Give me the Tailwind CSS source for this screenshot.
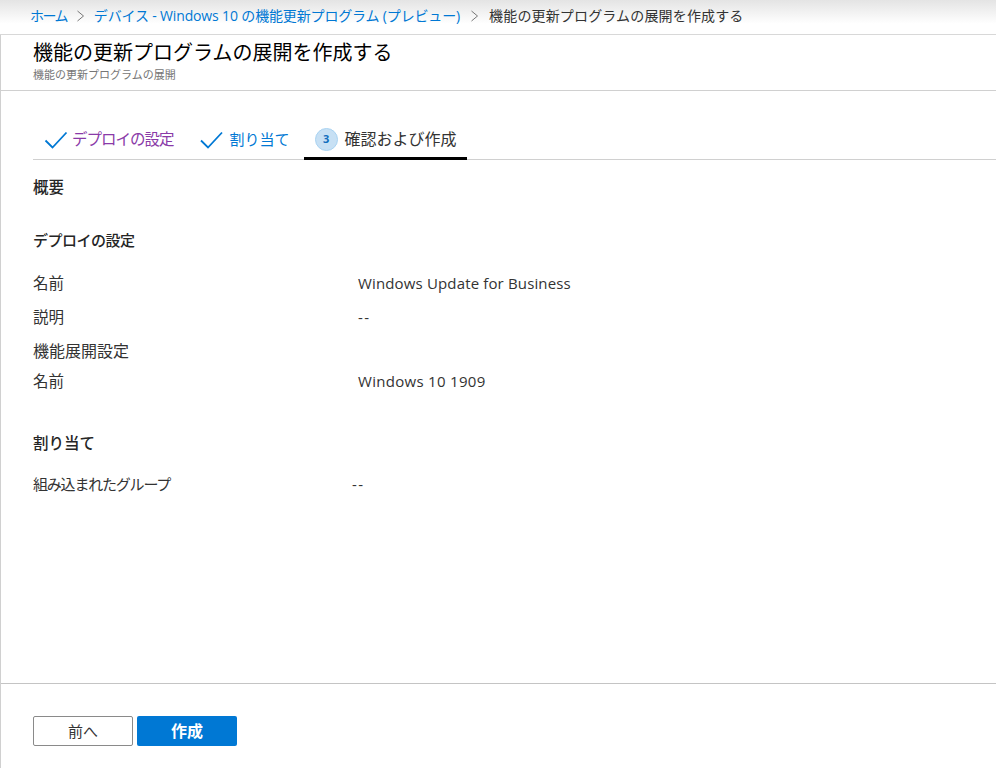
<!DOCTYPE html>
<html lang="ja">
<head>
    <meta charset="UTF-8">
    <title>機能の更新プログラムの展開を作成する</title>
    <script src="https://cdn.jsdelivr.net/npm/@tailwindcss/browser@4"></script>
</head>
<body class="bg-white h-[768px] w-[996px] overflow-hidden flex flex-col font-['Open_Sans','Noto_Sans_CJK_JP',sans-serif] text-[#333]">

    <!-- Breadcrumb -->
    <nav class="h-[35px] shrink-0 flex items-center pl-[30px] pb-[2px] gap-[9px] text-sm bg-gradient-to-b from-[#e4e4e4] to-white to-70% border-b border-[#d8d8d8]">
        <a class="text-[#0078d4] tracking-[-1.6px]">ホーム</a>
        <svg width="9" height="12" viewBox="0 0 9 12" fill="none" stroke="#777" stroke-width="1"><path d="M1.5 1l6 5-6 5"/></svg>
        <a class="text-[#0078d4] tracking-[-0.15px]">デバイス - Windows 10 の機能更新プログラム (プレビュー)</a>
        <svg class="ml-[1px]" width="9" height="12" viewBox="0 0 9 12" fill="none" stroke="#777" stroke-width="1"><path d="M1.5 1l6 5-6 5"/></svg>
        <span class="ml-[1px] tracking-[0.16px]">機能の更新プログラムの展開を作成する</span>
    </nav>

    <main class="flex-1 flex flex-col border-l border-[#d0d0d0]">
        <!-- Title -->
        <header class="h-[56px] shrink-0 pl-[32px] pt-[4px] border-b border-[#d0d0d0]">
            <h1 class="text-[20px] leading-[28px] text-black">機能の更新プログラムの展開を作成する</h1>
            <p class="mt-[2px] text-[11px] leading-[12px] text-[#767676]">機能の更新プログラムの展開</p>
        </header>

        <div class="flex-1 pl-[32px]">
            <!-- Steps -->
            <div class="mt-[30px] h-[39px] flex border-b border-[#d0d0d0]">
                <div class="flex items-center pl-[11px] pr-[15px] gap-[4px] pb-[1px]">
                    <svg width="24" height="18" viewBox="0 0 24 18" fill="none" stroke="#0078d4" stroke-width="1.8"><path d="M1.5 9.5l7 7L22.5 1.5"/></svg>
                    <span class="text-[15.5px] tracking-[-1px] text-[#8a3aa8]">デプロイの設定</span>
                </div>
                <div class="flex items-center pl-[11px] pr-[14px] gap-[7px] pb-[1px]">
                    <svg width="23" height="18" viewBox="0 0 23 18" fill="none" stroke="#0078d4" stroke-width="1.8"><path d="M1 9.5l7 7L22 1.5"/></svg>
                    <span class="text-[15px] text-[#0078d4]">割り当て</span>
                </div>
                <div class="h-[39px] flex items-center pl-[11px] pr-[10px] gap-[7px] border-b-[3px] border-black">
                    <span class="w-[23px] h-[23px] rounded-full bg-[#c7e0f4] border border-[#a9d3f2] flex items-center justify-center text-[11px] font-bold text-[#106ebe]">3</span>
                    <span class="text-base">確認および作成</span>
                </div>
            </div>

            <!-- Summary -->
            <h2 class="mt-[17px] text-[15.5px] leading-[20px] font-medium text-[#252525]">概要</h2>

            <h3 class="mt-[33px] text-[15px] tracking-[-0.5px] leading-[20px] font-medium text-[#252525]">デプロイの設定</h3>
            <dl class="mt-[23px] text-[15.5px]">
                <div class="h-[20px] flex leading-[20px]">
                    <dt class="w-[325px]">名前</dt>
                    <dd class="text-[15px] tracking-[0.15px]">Windows Update for Business</dd>
                </div>
                <div class="mt-[14px] h-[20px] flex leading-[20px]">
                    <dt class="w-[325px]">説明</dt>
                    <dd class="text-[15px] tracking-[1.5px]">--</dd>
                </div>
                <div class="mt-[14px] h-[20px] leading-[20px] text-base">機能展開設定</div>
                <div class="mt-[10px] h-[20px] flex leading-[20px]">
                    <dt class="w-[325px]">名前</dt>
                    <dd class="text-[15px] tracking-[0.3px]">Windows 10 1909</dd>
                </div>
            </dl>

            <h3 class="mt-[42px] text-[15.5px] leading-[20px] font-medium text-[#252525]">割り当て</h3>
            <div class="mt-[21px] h-[20px] flex leading-[20px]">
                <span class="w-[319px] text-[15px] tracking-[-1.2px]">組み込まれたグループ</span>
                <span class="text-[15px] tracking-[1.5px]">--</span>
            </div>
        </div>

        <!-- Footer -->
        <footer class="h-[85px] shrink-0 border-t border-[#c4c4c4] pl-[32px] pt-[32px] flex items-start gap-[4px]">
            <button class="w-[100px] h-[30px] border border-[#8a8a8a] rounded-[2px] bg-white text-[15px] flex items-center justify-center">前へ</button>
            <button class="w-[100px] h-[30px] rounded-[2px] bg-[#0078d4] text-base font-bold text-white flex items-center justify-center pb-[1px]">作成</button>
        </footer>
    </main>

</body>
</html>
